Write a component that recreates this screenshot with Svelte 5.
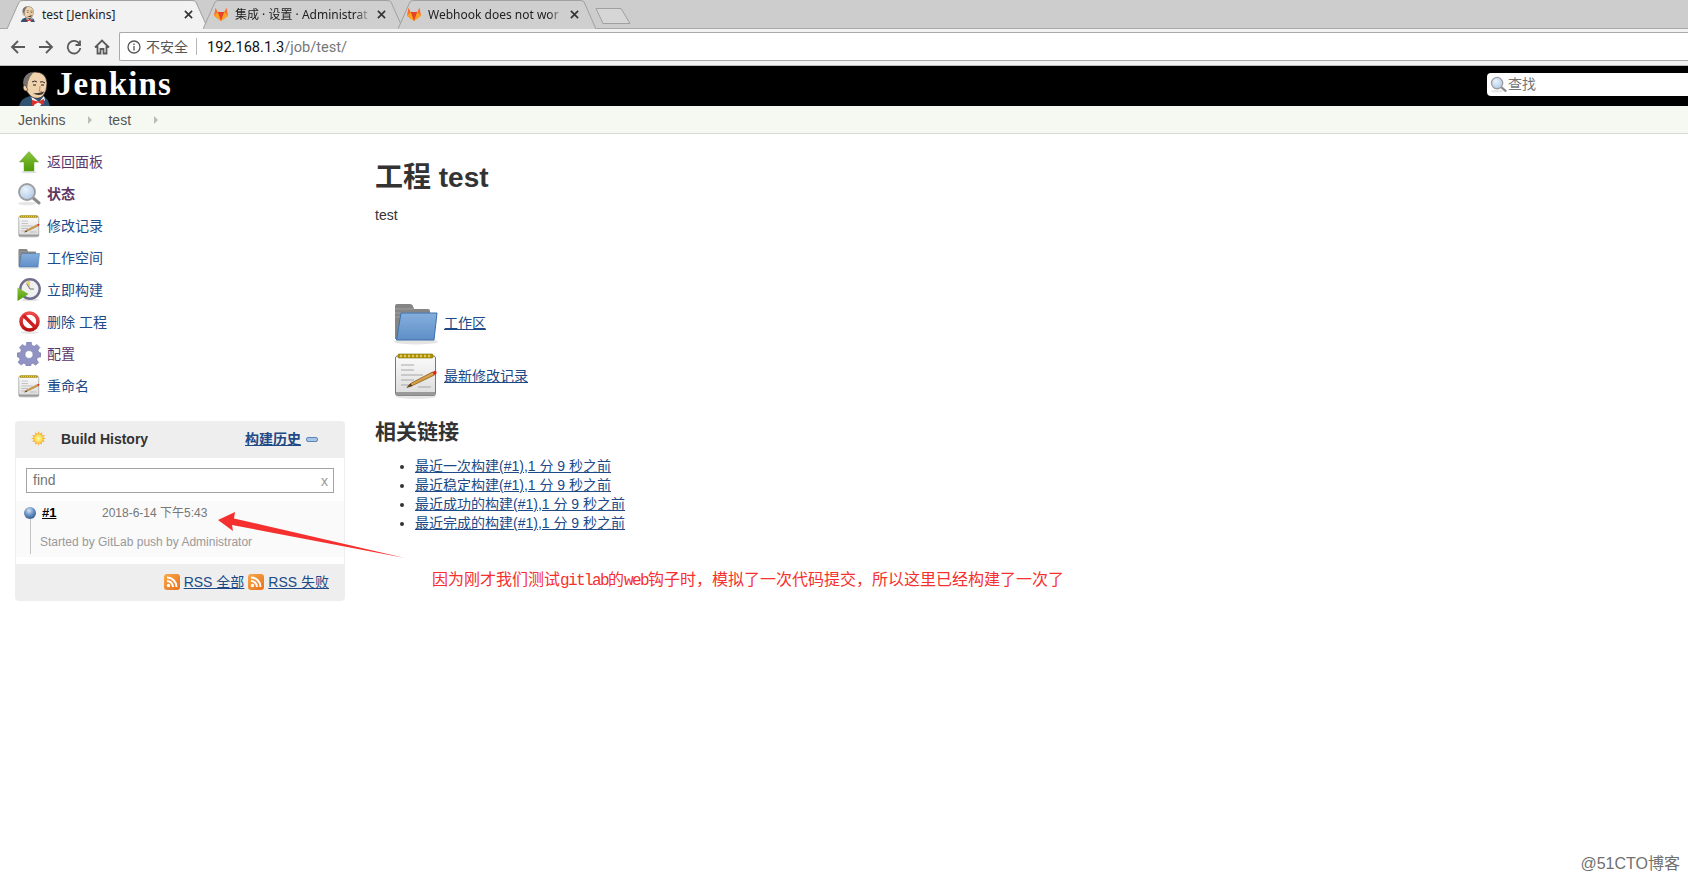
<script>
  const tabs = [
    { title: 'test [Jenkins]', icon: 'i-head', active: true, width: 201, padL: 13, padR: 15 },
    { title: '集成 · 设置 · Administrat', icon: 'i-fox', active: false, width: 200, padL: 10, padR: 17 },
    { title: 'Webhook does not wor', icon: 'i-fox', active: false, width: 198, padL: 8, padR: 17 }
  ];

  const tasks = [
    { label: '返回面板', icon: 'i-up', cls: 'visited' },
    { label: '状态', icon: 'i-search', cls: 'visited strong' },
    { label: '修改记录', icon: 'i-notepad', cls: '' },
    { label: '工作空间', icon: 'i-folder', cls: '' },
    { label: '立即构建', icon: 'i-clock', cls: '' },
    { label: '删除 工程', icon: 'i-nope', cls: '' },
    { label: '配置', icon: 'i-gear', cls: 'visited' },
    { label: '重命名', icon: 'i-notepad', cls: '' }
  ];

  const permalinks = [
    '最近一次构建(#1),1 分 9 秒之前',
    '最近稳定构建(#1),1 分 9 秒之前',
    '最近成功的构建(#1),1 分 9 秒之前',
    '最近完成的构建(#1),1 分 9 秒之前'
  ];
</script>

<svg class="defs" aria-hidden="true">
  <defs>
    <linearGradient id="g-paper" x1="0" y1="0" x2="0" y2="1">
      <stop offset="0" stop-color="#fafafa" />
      <stop offset="1" stop-color="#dcdcdc" />
    </linearGradient>
    <linearGradient id="g-folder" x1="0" y1="0" x2="0" y2="1">
      <stop offset="0" stop-color="#85aedd" />
      <stop offset="1" stop-color="#5f8fc8" />
    </linearGradient>
    <linearGradient id="g-green" x1="0" y1="0" x2="0" y2="1">
      <stop offset="0" stop-color="#8cc63f" />
      <stop offset="1" stop-color="#4e9a06" />
    </linearGradient>
    <linearGradient id="g-red" x1="0" y1="0" x2="0" y2="1">
      <stop offset="0" stop-color="#ec4a4a" />
      <stop offset="1" stop-color="#b81414" />
    </linearGradient>
    <linearGradient id="g-rss" x1="0" y1="0" x2="1" y2="1">
      <stop offset="0" stop-color="#f7a94c" />
      <stop offset="1" stop-color="#e9711c" />
    </linearGradient>
    <radialGradient id="g-ball" cx="0.42" cy="0.3" r="0.75">
      <stop offset="0" stop-color="#d5e3f3" />
      <stop offset="0.5" stop-color="#6b93c4" />
      <stop offset="1" stop-color="#2c5687" />
    </radialGradient>
    <radialGradient id="g-lens" cx="0.4" cy="0.35" r="0.8">
      <stop offset="0" stop-color="#eaf2fb" />
      <stop offset="1" stop-color="#a5c3e6" />
    </radialGradient>
    <radialGradient id="g-sun" cx="0.5" cy="0.5" r="0.5">
      <stop offset="0" stop-color="#fffbb0" />
      <stop offset="1" stop-color="#f8d53a" />
    </radialGradient>
  </defs>

  <symbol id="i-folder" viewBox="0 0 48 48">
    <ellipse cx="24" cy="43.500" rx="22" ry="3" fill="#e4e4e4" />
    <path d="M3 8q0-2 2-2h13q2 0 3 2l1 3h14q2 0 2 2v28H3z" fill="#858585" />
    <path d="M3 11h18M3 15h34M3 19h34" stroke="#a0a0a0" stroke-width="1" />
    <path d="M9 15h36l-3 27H4.500z" fill="url(#g-folder)" stroke="#3d6fa8" stroke-width="1" />
  </symbol>

  <symbol id="i-notepad" viewBox="0 0 48 48">
    <ellipse cx="24" cy="45.500" rx="20" ry="2.500" fill="#e6e6e6" />
    <rect x="3.500" y="5" width="40" height="39.500" rx="2" fill="url(#g-paper)" stroke="#777" />
    <rect x="4" y="41" width="39" height="3.500" fill="#9a9a9a" />
    <rect x="6" y="3" width="35" height="4" rx="1" fill="#b29400" stroke="#7f6a00" stroke-width="0.600" />
    <path d="M9 3.800v2.400M13 3.800v2.400M17 3.800v2.400M21 3.800v2.400M25 3.800v2.400M29 3.800v2.400M33 3.800v2.400M37 3.800v2.400" stroke="#f6eaa8" stroke-width="1.200" />
    <path d="M9 14h13M9 19h13M9 24h22M9 29h13M9 34h10M26 36h13" stroke="#a8a8a8" stroke-width="1.200" />
    <path d="M15 36.500l3.500-4 22-11.500 2 3-22 10.500z" fill="#d99f45" stroke="#7a5310" stroke-width="0.700" />
    <path d="M15 36.500l3.500-4 2 2.500z" fill="#5a4020" />
    <path d="M40.500 21l3-1.500q1.500 1 1 3l-2 1.500z" fill="#e02020" />
  </symbol>

  <symbol id="i-up" viewBox="0 0 24 24">
    <ellipse cx="12" cy="22" rx="8" ry="1.500" fill="#e2e2e2" />
    <path d="M12 1.500 21.500 12H17v9H7v-9H2.500z" fill="url(#g-green)" stroke="#6ba32e" stroke-width="0.500" />
  </symbol>

  <symbol id="i-search" viewBox="0 0 24 24">
    <ellipse cx="10" cy="21.500" rx="9" ry="1.800" fill="#e6e6e6" />
    <path d="M15 15l7 6" stroke="#8a8a8a" stroke-width="3" stroke-linecap="round" />
    <circle cx="10" cy="10" r="8" fill="url(#g-lens)" stroke="#9d9d9d" stroke-width="1.800" />
  </symbol>

  <symbol id="i-clock" viewBox="0 0 24 24">
    <ellipse cx="13" cy="22" rx="9" ry="1.300" fill="#e6e6e6" />
    <circle cx="13" cy="11" r="9.700" fill="#f0f0f0" stroke="#6e6e8c" stroke-width="2.400" />
    <path d="M13 11 9 3.800q2-1 4-.8z" fill="#e6d36a" />
    <path d="M13 11 9.500 5.500M13 11h4" stroke="#555" stroke-width="0.800" />
    <path d="M0.500 9.500 11.500 16 0.500 23z" fill="url(#g-green)" />
  </symbol>

  <symbol id="i-nope" viewBox="0 0 24 24">
    <ellipse cx="12.500" cy="22.500" rx="9" ry="1.300" fill="#e6e6e6" />
    <circle cx="12.500" cy="11.500" r="8.500" fill="#fff" stroke="url(#g-red)" stroke-width="3.600" />
    <path d="M6.500 5.500 18.500 17.500" stroke="#d01f1f" stroke-width="3.400" />
  </symbol>

  <symbol id="i-gear" viewBox="0 0 24 24">
    <path fill-rule="evenodd" fill="#9193c4" stroke="#6c7199" stroke-width="0.500" d="M9.800 0h4.400l.6 3.300 2.400 1 2.700-1.900 3 3.100-1.900 2.700 1 2.300L24 11v3.800l-3.300.6-1 2.400 1.900 2.700-3 2.700-2.700-1.900-1.700.7-.6 2h-4.400l-.6-2-1.900-.8-2.700 1.900-3-2.800 1.900-2.600-1-2.400L0 14.800V11l3.300-.6 1-2.300L2.400 5.500l3-3.100 2.700 1.900 1.100-.9zM12 8.500a4 4 0 1 0 0 8 4 4 0 0 0 0-8z" />
  </symbol>

  <symbol id="i-fox" viewBox="0 0 16 16">
    <path d="M8 15 1 9.800l1.500-8L4.700 6h6.600l2.200-4.200 1.500 8z" fill="#fc6d26" />
    <path d="M8 15 4.700 6h6.600z" fill="#e24329" />
    <path d="M8 15 1 9.800 4.700 6zM8 15l7-5.200L11.300 6z" fill="#fca326" />
  </symbol>

  <symbol id="i-head" viewBox="0 0 32 35">
    <path d="M0 35q2-8 11-10h13q5 2 7 10z" fill="#2f5270" />
    <path d="M12 25l8 6 5-6 1 4-5 6h-6z" fill="#f4f4f4" />
    <path d="M5 12Q5 1 16 1q11 0 12 11 0 8-4 13-5 4-11 1Q7 22 5 12z" fill="#f0d2ad" stroke="#2c2624" stroke-width="0.700" />
    <path d="M5 16Q2 7 9 3q3-2 5-1-4 4-5 9l-1 8q-2-1-3-3z" fill="#77736f" />
    <path d="M6 14q-3 1-1 5 2 2 4 0z" fill="#f0d2ad" stroke="#2c2624" stroke-width="0.500" />
    <path d="M13 11q3-2 5 0M21 11q3-1 5 1" stroke="#2c2624" stroke-width="1" fill="none" />
    <path d="M14 14h3M22 14h3" stroke="#1c1c1c" stroke-width="1.200" />
    <path d="M21 15q0 4-1 5l3 .500" stroke="#a87f5a" stroke-width="0.800" fill="none" />
    <path d="M14 22q5 1 11-1.500-1 3.500-5 3.500-4 0-6-2z" fill="#3a302c" />
    <path d="M13 29l6 1.500 6-2.500v6l-6-2.500-6 3.500z" fill="#d8302c" />
  </symbol>

  <symbol id="i-rss" viewBox="0 0 16 16">
    <rect width="16" height="16" rx="3" fill="url(#g-rss)" />
    <circle cx="4.500" cy="11.500" r="1.700" fill="#fff" />
    <path d="M3 7a6 6 0 0 1 6 6M3 3.500a9.500 9.500 0 0 1 9.500 9.500" fill="none" stroke="#fff" stroke-width="2" />
  </symbol>

  <symbol id="i-sun" viewBox="0 0 16 16">
    <path d="M8 0l1.300 3 2.700-1.700-.2 3.200 3.200-.2L13 7l3 1-3 1 1.700 2.700-3.200-.2.200 3.200L9 13l-1 3-1-3-2.700 1.700.2-3.200-3.200.2L3 9 0 8l3-1-1.700-2.700 3.200.2-.2-3.200L7 3z" fill="#f5b04a" />
    <circle cx="8" cy="8" r="4.700" fill="url(#g-sun)" />
  </symbol>
</svg>

<div class="page">
  <div class="tabstrip">
    {#each tabs as tab}
      <div class="tab" class:active={tab.active} style="width: {tab.width}px; padding: 0 {tab.padR}px 0 {tab.padL}px">
        <svg class="tab-shape" viewBox="0 0 100 28" preserveAspectRatio="none" aria-hidden="true">
          <path d="M0 28 6 2Q6.500 0.500 8 0.500H92Q93.500 0.500 94 2L100 28" vector-effect="non-scaling-stroke" />
        </svg>
        <svg class="favicon"><use href="#{tab.icon}" /></svg>
        <span class="tab-title">{tab.title}</span>
        <svg class="tab-close" viewBox="0 0 10 10" aria-hidden="true"><path d="M1 1l8 8M9 1l-8 8" /></svg>
      </div>
    {/each}
    <svg class="newtab" viewBox="0 0 36 18" aria-hidden="true"><path d="M1 1.500H26L35 16.500H8z" /></svg>
  </div>

  <div class="toolbar">
    <svg class="nav" viewBox="0 0 16 16"><path d="M15 8H2M8 2 2 8l6 6" /></svg>
    <svg class="nav" viewBox="0 0 16 16"><path d="M1 8h13M8 2l6 6-6 6" /></svg>
    <svg class="nav" viewBox="0 0 16 16"><path d="M13.500 5A6.300 6.300 0 1 0 14.300 9M14 1.500V6H9.500" /></svg>
    <svg class="nav" viewBox="0 0 16 16"><path d="M1 8.500 8 1.500l7 7M3.500 7v7.500h3V10h3v4.500h3V7" /></svg>
    <div class="omnibox">
      <svg class="info" viewBox="0 0 14 14"><circle cx="7" cy="7" r="6" /><path d="M7 6v4.500M7 3.500v1.500" /></svg>
      <span class="insecure">不安全</span>
      <span class="sep"></span>
      <span class="url">192.168.1.3<span class="url-path">/job/test/</span></span>
    </div>
  </div>

  <header class="jenkins-head">
    <svg class="butler"><use href="#i-head" /></svg>
    <span class="brand">Jenkins</span>
    <div class="search">
      <svg class="search-icon"><use href="#i-search" /></svg>
      <span class="search-hint">查找</span>
    </div>
  </header>

  <nav class="crumbs">
    <a href="#top">Jenkins</a><i class="crumb-arrow"></i>
    <a href="#top">test</a><i class="crumb-arrow"></i>
  </nav>

  <div class="body">
    <aside class="side">
      <ul class="tasks">
        {#each tasks as task}
          <li class={task.cls}>
            <svg class="task-icon"><use href="#{task.icon}" /></svg>
            <a href="#top">{task.label}</a>
          </li>
        {/each}
      </ul>

      <section class="history">
        <div class="history-head">
          <svg class="sun"><use href="#i-sun" /></svg>
          <span class="history-title">Build History</span>
          <a class="trend" href="#top">构建历史</a>
          <span class="minus"></span>
        </div>
        <div class="history-body">
          <div class="find"><span class="find-hint">find</span><span class="find-x">x</span></div>
          <div class="build">
            <div class="build-top">
              <svg class="ball" viewBox="0 0 12 12"><circle cx="6" cy="6" r="6" fill="url(#g-ball)" /></svg>
              <a class="build-no" href="#top">#1</a>
              <span class="build-date">2018-6-14 下午5:43</span>
            </div>
            <div class="build-desc">Started by GitLab push by Administrator</div>
          </div>
        </div>
        <div class="history-foot">
          <svg class="rss"><use href="#i-rss" /></svg>
          <a href="#top">RSS 全部</a>
          <svg class="rss"><use href="#i-rss" /></svg>
          <a href="#top">RSS 失败</a>
        </div>
      </section>
    </aside>

    <main class="main">
      <h1>工程 test</h1>
      <p class="desc">test</p>

      <div class="shortcuts">
        <div class="shortcut first">
          <svg class="big-icon"><use href="#i-folder" /></svg>
          <a href="#top">工作区</a>
        </div>
        <div class="shortcut">
          <svg class="big-icon"><use href="#i-notepad" /></svg>
          <a href="#top">最新修改记录</a>
        </div>
      </div>

      <h2>相关链接</h2>
      <ul class="permalinks">
        {#each permalinks as link}
          <li><a href="#top">{link}</a></li>
        {/each}
      </ul>
    </main>
  </div>

  <!-- annotations drawn on top of the screenshot -->
  <svg class="arrow" viewBox="0 0 200 60" aria-hidden="true">
    <path d="M3 22 20 14 19 20.500 190 60 17 27 18 33z" fill="#f5302e" />
  </svg>
  <div class="note">因为刚才我们测试<span class="note-mono">gitlab</span>的<span class="note-mono">web</span>钩子时，模拟了一次代码提交，所以这里已经构建了一次了</div>
  <div class="watermark">@51CTO博客</div>
</div>

<style>
  :global(body) {
    margin: 0;
    background: #fff;
  }

  .defs {
    position: absolute;
    width: 0;
    height: 0;
  }

  .page {
    position: relative;
    height: 882px;
    overflow: hidden;
    font-family: "Liberation Sans", "Noto Sans CJK SC", sans-serif;
    font-size: 14px;
    color: #333;
  }

  a {
    color: #204a87;
  }

  /* browser chrome */
  .tabstrip {
    display: flex;
    align-items: flex-end;
    height: 28px;
    padding-left: 7px;
    background: #cdcdcd;
    border-bottom: 1px solid #a8a8a8;
    box-sizing: content-box;
  }

  .tab {
    position: relative;
    display: flex;
    align-items: center;
    height: 28px;
    margin-right: -5px;
    box-sizing: border-box;
    font-family: "Noto Sans", "Noto Sans CJK SC", sans-serif;
    font-size: 12px;
    color: #222;
  }

  .tab-shape {
    position: absolute;
    left: 0;
    top: 0;
    width: 100%;
    height: 29px;
    fill: #cfcfcf;
    stroke: #a0a0a0;
    stroke-width: 1;
  }

  .tab.active .tab-shape {
    fill: #f2f2f2;
  }

  .favicon {
    position: relative;
    flex: none;
    width: 16px;
    height: 16px;
    margin-right: 6px;
  }

  .tab-title {
    position: relative;
    flex: 1;
    min-width: 0;
    white-space: nowrap;
    mask-image: linear-gradient(to right, #000 88%, transparent);
  }

  .tab.active .tab-title {
    mask-image: none;
  }

  .tab-close {
    position: relative;
    flex: none;
    width: 9px;
    height: 9px;
    margin-left: 5px;
    fill: none;
    stroke: #333;
    stroke-width: 1.800;
  }

  .newtab {
    width: 36px;
    height: 18px;
    margin: 0 0 3px 4px;
    fill: #d6d6d6;
    stroke: #a0a0a0;
  }

  .toolbar {
    display: flex;
    align-items: center;
    height: 37px;
    padding: 0 0 1px 10px;
    background: #f2f2f2;
    border-bottom: 1px solid #bdbdbd;
    box-sizing: border-box;
  }

  .nav {
    flex: none;
    width: 16px;
    height: 16px;
    margin-right: 12px;
    fill: none;
    stroke: #5a5a5a;
    stroke-width: 1.800;
  }

  .omnibox {
    flex: 1;
    display: flex;
    align-items: center;
    height: 29px;
    margin-left: -3px;
    padding-left: 7px;
    background: #fff;
    border: 1px solid #a9a9a9;
    border-right: 0;
    border-radius: 2px 0 0 2px;
    box-sizing: border-box;
    font-family: "Noto Sans CJK SC", sans-serif;
  }

  .info {
    width: 14px;
    height: 14px;
    fill: none;
    stroke: #555;
    stroke-width: 1.300;
  }

  .insecure {
    margin: -2px 0 0 5px;
    font-size: 14px;
    color: #555;
  }

  .sep {
    width: 1px;
    height: 17px;
    margin: 0 10px 0 8px;
    background: #b5b5b5;
  }

  .url {
    font-family: Roboto, sans-serif;
    font-size: 14.600px;
    color: #111;
  }

  .url-path {
    color: #777;
  }

  /* jenkins header */
  .jenkins-head {
    display: flex;
    align-items: center;
    height: 40px;
    padding-left: 19px;
    background: #000;
  }

  .butler {
    align-self: flex-end;
    flex: none;
    width: 32px;
    height: 35px;
  }

  .brand {
    margin: -3px 0 0 5px;
    font-family: "Liberation Serif", serif;
    font-size: 33px;
    font-weight: 700;
    letter-spacing: 1.100px;
    color: #fff;
  }

  .search {
    display: flex;
    align-items: center;
    gap: 1px;
    width: 201px;
    height: 23px;
    margin: 0 0 3px auto;
    padding-left: 3px;
    box-sizing: border-box;
    background: #fff;
    border-radius: 4px 0 0 4px;
    font-family: "Noto Sans CJK SC", sans-serif;
    color: #757575;
  }

  .search-hint {
    margin-top: -3px;
  }

  .search-icon {
    flex: none;
    width: 17px;
    height: 17px;
  }

  .crumbs {
    display: flex;
    align-items: center;
    height: 28px;
    padding-left: 18px;
    background: #f6f8f2;
    border-bottom: 1px solid #d8d8d8;
    box-sizing: border-box;
  }

  .crumbs a {
    color: #555;
    text-decoration: none;
  }

  .crumb-arrow {
    width: 0;
    height: 0;
    margin: 0 16px 0 23px;
    border-left: 4px solid #bbb;
    border-top: 4px solid transparent;
    border-bottom: 4px solid transparent;
  }

  .body {
    display: flex;
  }

  /* side panel */
  .side {
    flex: none;
    width: 330px;
    margin-left: 15px;
  }

  .tasks {
    list-style: none;
    margin: 0;
    padding: 12px 0 0;
  }

  .tasks li {
    display: flex;
    align-items: center;
    height: 32px;
  }

  .task-icon {
    flex: none;
    width: 24px;
    height: 24px;
    margin: 0 6px 0 2px;
  }

  .tasks a {
    padding-bottom: 3px;
    text-decoration: none;
  }

  .tasks .visited a {
    color: #5c3566;
  }

  .tasks .strong a {
    font-weight: 700;
  }

  .history {
    margin-top: 19px;
    border-radius: 4px;
    overflow: hidden;
  }

  .history-head {
    display: flex;
    align-items: center;
    height: 37px;
    padding: 0 0 2px 16px;
    box-sizing: border-box;
    background: #eee;
  }

  .sun {
    flex: none;
    width: 15px;
    height: 15px;
    margin-right: 15px;
  }

  .history-title {
    font-weight: 700;
  }

  .trend {
    margin: -2px 0 0 auto;
    font-weight: 700;
  }

  .minus {
    width: 12px;
    height: 5px;
    margin: 2px 27px 0 5px;
    background: #a9c4e4;
    border: 1px solid #5b86bb;
    border-radius: 2px;
    box-sizing: border-box;
  }

  .history-body {
    padding: 10px 1px 7px;
    background: #fff;
    border: 1px solid #eee;
    border-width: 0 1px;
    box-sizing: border-box;
  }

  .find {
    display: flex;
    justify-content: space-between;
    align-items: center;
    height: 25px;
    margin: 0 9px;
    padding: 0 6px;
    border: 1px solid #a3a3a3;
    box-sizing: border-box;
    color: #757575;
  }

  .find-hint {
    margin-top: -2px;
  }

  .find-x {
    color: #999;
    margin-right: -1px;
  }

  .build {
    position: relative;
    height: 56px;
    margin: 8px -1px 0;
    background: #fafafa;
  }

  .build::before {
    content: "";
    position: absolute;
    left: 14px;
    top: 18px;
    bottom: 3px;
    width: 1px;
    background: #c4c4c4;
  }

  .build-top {
    display: flex;
    align-items: center;
    height: 22px;
  }

  .ball {
    flex: none;
    width: 12px;
    height: 12px;
    margin: 2px 6px 0 8px;
  }

  .build-no {
    width: 60px;
    font-size: 13px;
    font-weight: 700;
    color: #000;
  }

  .build-date {
    margin-top: -2px;
    font-size: 12px;
    color: #777;
  }

  .build-desc {
    margin: 12px 0 0 24px;
    font-size: 12px;
    color: #999;
  }

  .history-foot {
    display: flex;
    justify-content: flex-end;
    align-items: center;
    gap: 4px;
    height: 37px;
    padding: 0 16px 3px 0;
    box-sizing: border-box;
    background: #eee;
  }

  .rss {
    width: 16px;
    height: 16px;
    margin-top: 2px;
  }

  /* main panel */
  .main {
    padding-left: 30px;
  }

  h1 {
    margin: 24px 0 0;
    font-size: 28px;
    line-height: 39px;
    font-weight: 700;
    color: #333;
  }

  .desc {
    margin: 8px 0 0;
    line-height: 20px;
  }

  .shortcuts {
    margin: 71px 0 0 17px;
  }

  .shortcut {
    display: flex;
    align-items: center;
    gap: 4px;
    height: 53px;
  }

  .shortcut.first {
    height: 52px;
  }

  .big-icon {
    flex: none;
    width: 48px;
    height: 48px;
  }

  h2 {
    margin: 0;
    padding-top: 16px;
    font-size: 21px;
    line-height: 30px;
    font-weight: 700;
    color: #333;
  }

  .permalinks {
    margin: 10px 0 0;
    padding-left: 40px;
    line-height: 19px;
  }

  /* annotations */
  .arrow {
    position: absolute;
    left: 215px;
    top: 498px;
    width: 200px;
    height: 60px;
  }

  .note {
    position: absolute;
    left: 432px;
    top: 567px;
    font-family: "Noto Sans CJK SC", sans-serif;
    font-size: 16px;
    line-height: 22px;
    white-space: nowrap;
    color: #f5302e;
  }

  .note-mono {
    font-family: "Liberation Mono", monospace;
    letter-spacing: -1.600px;
  }

  .watermark {
    position: absolute;
    right: 8px;
    bottom: 8px;
    font-size: 16px;
    color: #707070;
  }
</style>
